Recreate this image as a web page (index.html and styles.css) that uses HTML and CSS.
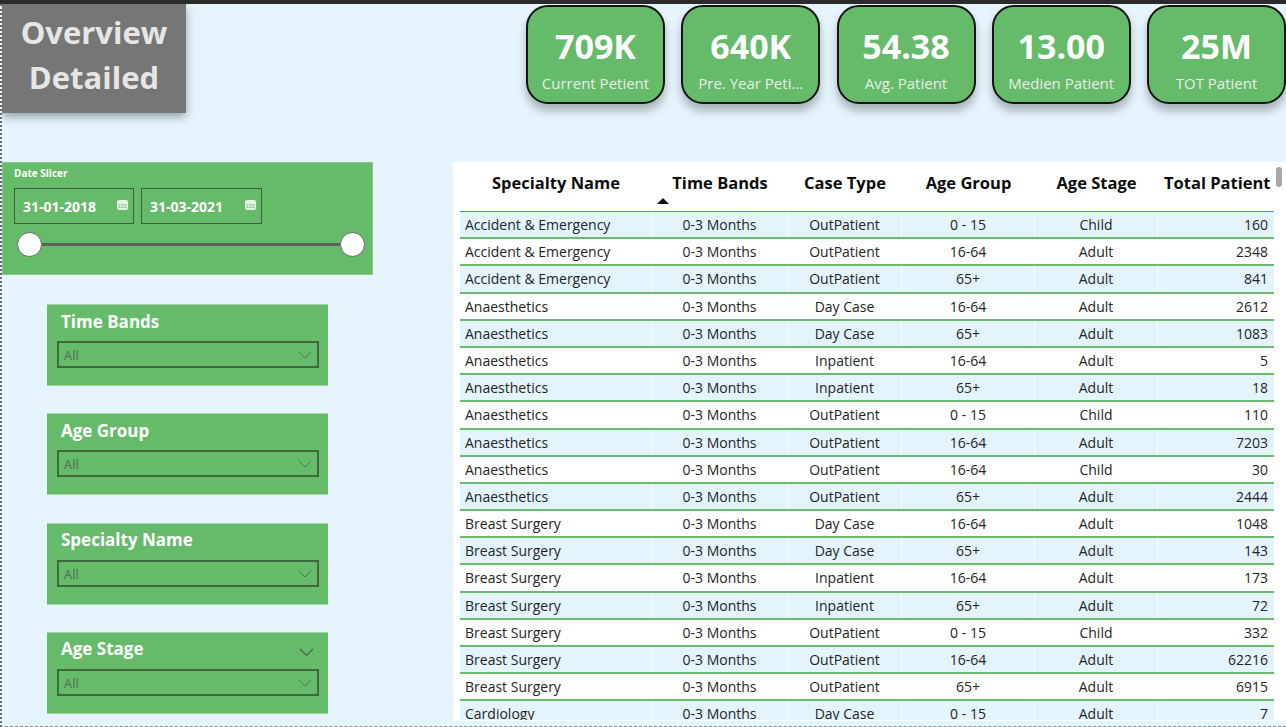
FILE: index.html
```html
<!DOCTYPE html>
<html lang="en">
<head>
<meta charset="utf-8">
<title>Overview Detailed</title>
<link rel="stylesheet" href="styles.css">
</head>
<body>
<div class="topbar"></div>
<div class="canvas">
  <header class="head">
    <div class="title">Overview<br>Detailed</div>
    <div class="kpis">
      <div class="kpi"><div class="kpi-val">709K</div><div class="kpi-lbl">Current Petient</div></div>
      <div class="kpi"><div class="kpi-val">640K</div><div class="kpi-lbl">Pre. Year Peti...</div></div>
      <div class="kpi"><div class="kpi-val">54.38</div><div class="kpi-lbl">Avg. Patient</div></div>
      <div class="kpi"><div class="kpi-val">13.00</div><div class="kpi-lbl">Medien Patient</div></div>
      <div class="kpi"><div class="kpi-val">25M</div><div class="kpi-lbl">TOT Patient</div></div>
    </div>
  </header>
  <main class="main">
    <aside class="filters">
      <section class="date-slicer">
        <div class="ds-label">Date Slicer</div>
        <div class="ds-dates">
          <div class="ds-box"><span>31-01-2018</span>
            <svg class="cal" width="11" height="10" viewBox="0 0 11 10"><rect x="0" y="0" width="11" height="10" rx="2" fill="#e4f3e4"/><rect x="1.5" y="4" width="2" height="1.5" fill="#8cc790"/><rect x="4.5" y="4" width="2" height="1.5" fill="#8cc790"/><rect x="7.5" y="4" width="2" height="1.5" fill="#8cc790"/><rect x="1.5" y="6.5" width="2" height="1.5" fill="#8cc790"/><rect x="4.5" y="6.5" width="2" height="1.5" fill="#8cc790"/><rect x="7.5" y="6.5" width="2" height="1.5" fill="#8cc790"/></svg>
          </div>
          <div class="ds-box ds-box2"><span>31-03-2021</span>
            <svg class="cal" width="11" height="10" viewBox="0 0 11 10"><rect x="0" y="0" width="11" height="10" rx="2" fill="#e4f3e4"/><rect x="1.5" y="4" width="2" height="1.5" fill="#8cc790"/><rect x="4.5" y="4" width="2" height="1.5" fill="#8cc790"/><rect x="7.5" y="4" width="2" height="1.5" fill="#8cc790"/><rect x="1.5" y="6.5" width="2" height="1.5" fill="#8cc790"/><rect x="4.5" y="6.5" width="2" height="1.5" fill="#8cc790"/><rect x="7.5" y="6.5" width="2" height="1.5" fill="#8cc790"/></svg>
          </div>
        </div>
        <div class="ds-slider">
          <div class="handle"></div>
          <div class="track"></div>
          <div class="handle"></div>
        </div>
      </section>
      <div class="slicers">
        <section class="slicer">
          <div class="sl-head"><span class="sl-title">Time Bands</span></div>
          <div class="dropdown"><span>All</span><svg width="14" height="8" viewBox="0 0 14 8"><polyline points="1,1 7,7 13,1" fill="none" stroke="#5b6b5b" stroke-width="1"/></svg></div>
        </section>
        <section class="slicer">
          <div class="sl-head"><span class="sl-title">Age Group</span></div>
          <div class="dropdown"><span>All</span><svg width="14" height="8" viewBox="0 0 14 8"><polyline points="1,1 7,7 13,1" fill="none" stroke="#5b6b5b" stroke-width="1"/></svg></div>
        </section>
        <section class="slicer">
          <div class="sl-head"><span class="sl-title">Specialty Name</span></div>
          <div class="dropdown"><span>All</span><svg width="14" height="8" viewBox="0 0 14 8"><polyline points="1,1 7,7 13,1" fill="none" stroke="#5b6b5b" stroke-width="1"/></svg></div>
        </section>
        <section class="slicer">
          <div class="sl-head"><span class="sl-title">Age Stage</span><svg class="head-chev" width="15" height="9" viewBox="0 0 15 9"><polyline points="1,1 7.5,7.5 14,1" fill="none" stroke="#4f5f4f" stroke-width="1.2"/></svg></div>
          <div class="dropdown"><span>All</span><svg width="14" height="8" viewBox="0 0 14 8"><polyline points="1,1 7,7 13,1" fill="none" stroke="#5b6b5b" stroke-width="1"/></svg></div>
        </section>
      </div>
    </aside>
    <section class="tablecard">
      <div class="tbl">
        <div class="thead">
          <div class="th c">Specialty Name</div>
          <div class="th c sorted"><span>Time Bands</span><i class="sort"></i></div>
          <div class="th c">Case Type</div>
          <div class="th c">Age Group</div>
          <div class="th c">Age Stage</div>
          <div class="th r">Total Patient</div>
        </div>
        <div class="tbody">
          <div class="tr"><div class="td l">Accident &amp; Emergency</div><div class="td c">0-3 Months</div><div class="td c">OutPatient</div><div class="td c">0 - 15</div><div class="td c">Child</div><div class="td r">160</div></div>
          <div class="tr"><div class="td l">Accident &amp; Emergency</div><div class="td c">0-3 Months</div><div class="td c">OutPatient</div><div class="td c">16-64</div><div class="td c">Adult</div><div class="td r">2348</div></div>
          <div class="tr"><div class="td l">Accident &amp; Emergency</div><div class="td c">0-3 Months</div><div class="td c">OutPatient</div><div class="td c">65+</div><div class="td c">Adult</div><div class="td r">841</div></div>
          <div class="tr"><div class="td l">Anaesthetics</div><div class="td c">0-3 Months</div><div class="td c">Day Case</div><div class="td c">16-64</div><div class="td c">Adult</div><div class="td r">2612</div></div>
          <div class="tr"><div class="td l">Anaesthetics</div><div class="td c">0-3 Months</div><div class="td c">Day Case</div><div class="td c">65+</div><div class="td c">Adult</div><div class="td r">1083</div></div>
          <div class="tr"><div class="td l">Anaesthetics</div><div class="td c">0-3 Months</div><div class="td c">Inpatient</div><div class="td c">16-64</div><div class="td c">Adult</div><div class="td r">5</div></div>
          <div class="tr"><div class="td l">Anaesthetics</div><div class="td c">0-3 Months</div><div class="td c">Inpatient</div><div class="td c">65+</div><div class="td c">Adult</div><div class="td r">18</div></div>
          <div class="tr"><div class="td l">Anaesthetics</div><div class="td c">0-3 Months</div><div class="td c">OutPatient</div><div class="td c">0 - 15</div><div class="td c">Child</div><div class="td r">110</div></div>
          <div class="tr"><div class="td l">Anaesthetics</div><div class="td c">0-3 Months</div><div class="td c">OutPatient</div><div class="td c">16-64</div><div class="td c">Adult</div><div class="td r">7203</div></div>
          <div class="tr"><div class="td l">Anaesthetics</div><div class="td c">0-3 Months</div><div class="td c">OutPatient</div><div class="td c">16-64</div><div class="td c">Child</div><div class="td r">30</div></div>
          <div class="tr"><div class="td l">Anaesthetics</div><div class="td c">0-3 Months</div><div class="td c">OutPatient</div><div class="td c">65+</div><div class="td c">Adult</div><div class="td r">2444</div></div>
          <div class="tr"><div class="td l">Breast Surgery</div><div class="td c">0-3 Months</div><div class="td c">Day Case</div><div class="td c">16-64</div><div class="td c">Adult</div><div class="td r">1048</div></div>
          <div class="tr"><div class="td l">Breast Surgery</div><div class="td c">0-3 Months</div><div class="td c">Day Case</div><div class="td c">65+</div><div class="td c">Adult</div><div class="td r">143</div></div>
          <div class="tr"><div class="td l">Breast Surgery</div><div class="td c">0-3 Months</div><div class="td c">Inpatient</div><div class="td c">16-64</div><div class="td c">Adult</div><div class="td r">173</div></div>
          <div class="tr"><div class="td l">Breast Surgery</div><div class="td c">0-3 Months</div><div class="td c">Inpatient</div><div class="td c">65+</div><div class="td c">Adult</div><div class="td r">72</div></div>
          <div class="tr"><div class="td l">Breast Surgery</div><div class="td c">0-3 Months</div><div class="td c">OutPatient</div><div class="td c">0 - 15</div><div class="td c">Child</div><div class="td r">332</div></div>
          <div class="tr"><div class="td l">Breast Surgery</div><div class="td c">0-3 Months</div><div class="td c">OutPatient</div><div class="td c">16-64</div><div class="td c">Adult</div><div class="td r">62216</div></div>
          <div class="tr"><div class="td l">Breast Surgery</div><div class="td c">0-3 Months</div><div class="td c">OutPatient</div><div class="td c">65+</div><div class="td c">Adult</div><div class="td r">6915</div></div>
          <div class="tr"><div class="td l">Cardiology</div><div class="td c">0-3 Months</div><div class="td c">Day Case</div><div class="td c">0 - 15</div><div class="td c">Adult</div><div class="td r">7</div></div>
        </div>
      </div>
      <div class="scroll"><div class="thumb"></div></div>
    </section>
  </main>
</div>
</body>
</html>
```
FILE: styles.css
```css
* { box-sizing: border-box; }
html, body {
  margin: 0;
  padding: 0;
}
body {
  width: 1286px;
  height: 727px;
  overflow: hidden;
  background: #e6f5fd;
  font-family: "Open Sans", "Noto Sans", "DejaVu Sans", sans-serif;
}
.topbar {
  height: 4px;
  background: #2b2b2b;
}
.canvas {
  height: 723px;
  border-left: 2px dotted #6a6a6a;
  border-bottom: 1px dashed #8a8a8a;
  background: #e6f5fd;
  overflow: hidden;
}
.head {
  height: 158px;
  display: flex;
  align-items: flex-start;
}
.title {
  width: 184px;
  height: 109px;
  background: #767676;
  box-shadow: 0 4px 9px rgba(0, 0, 0, 0.35);
  color: #e6e6e6;
  font-weight: 700;
  font-size: 31px;
  line-height: 45px;
  text-align: center;
  padding-top: 6px;
}
.kpis {
  margin-left: auto;
  margin-top: 1px;
  display: flex;
  gap: 16.25px;
}
.kpi {
  width: 139px;
  height: 99px;
  border: 2px solid #141414;
  border-radius: 22px;
  background: #65bb6a;
  box-shadow: 0 7px 10px rgba(0, 0, 0, 0.28);
  display: flex;
  flex-direction: column;
  align-items: center;
  padding-top: 19px;
}
.kpi-val {
  color: #ffffff;
  font-weight: 700;
  font-size: 34px;
  line-height: 40px;
}
.kpi-lbl {
  margin-top: 7px;
  color: #e9ede9;
  font-size: 15px;
  line-height: 20px;
  white-space: nowrap;
}
.main {
  display: flex;
  align-items: flex-start;
}
.filters {
  width: 451px;
}
.date-slicer {
  width: 371px;
  height: 113px;
  background: #65bb6a;
  border: 1px solid #86c98a;
  padding: 3px 0 0 11px;
}
.ds-label {
  color: #ffffff;
  font-weight: 700;
  font-size: 10px;
  line-height: 14px;
}
.ds-dates {
  margin-top: 8px;
  display: flex;
  gap: 7px;
}
.ds-box {
  width: 120px;
  height: 36px;
  border: 1.5px solid #3d5e3f;
  display: flex;
  align-items: center;
  justify-content: space-between;
  padding: 0 5px 0 8px;
  color: #ffffff;
  font-weight: 700;
  font-size: 14px;
}
.ds-box2 { width: 121px; }
.cal { margin-top: -3px; }
.ds-slider {
  margin-top: 8px;
  margin-left: 3px;
  width: 348px;
  height: 25px;
  display: flex;
  align-items: center;
}
.handle {
  width: 25px;
  height: 25px;
  flex: none;
  border-radius: 50%;
  background: #ffffff;
  border: 1.5px solid #6b6b6b;
}
.track {
  flex: 1;
  height: 3px;
  background: #5f5f5f;
}
.slicers {
  margin-left: 45px;
  margin-top: 29px;
  display: flex;
  flex-direction: column;
  gap: 27.3px;
}
.slicer {
  width: 281px;
  height: 82px;
  background: #65bb6a;
  border-top: 1px solid #9fd6a2;
  border-bottom: 1px solid #9fd6a2;
  padding: 5.5px 0 0 10px;
}
.sl-head {
  display: flex;
  justify-content: space-between;
  align-items: flex-start;
  padding-left: 4px;
  padding-right: 14px;
  height: 22px;
}
.sl-title {
  color: #ffffff;
  font-weight: 700;
  font-size: 17px;
  line-height: 22px;
}
.head-chev { margin-top: 10px; }
.dropdown {
  margin-top: 8.5px;
  width: 262px;
  height: 27px;
  border: 2px solid #40683f;
  display: flex;
  align-items: center;
  justify-content: space-between;
  padding: 1px 5px 0 5px;
  color: #566c57;
  font-size: 13px;
}
.dropdown svg { margin-top: 0; }
.tablecard {
  width: 833px;
  height: 559px;
  background: #ffffff;
  padding-left: 7px;
  display: flex;
}
.tbl {
  width: 814px;
}
.thead, .tr {
  display: grid;
  grid-template-columns: 192px 136px 114px 133px 123px 116px;
}
.thead {
  height: 50px;
  border-bottom: 1px solid #4a8fdb;
}
.th {
  color: #0d0d0d;
  font-weight: 700;
  font-size: 16.5px;
  line-height: 22px;
  padding: 9.5px 6px 0;
  white-space: nowrap;
}
.th.c { text-align: center; }
.th.r { text-align: right; }
.th.sorted {
  display: flex;
  flex-direction: column;
  align-items: center;
}
.sort {
  align-self: flex-start;
  margin-top: 4px;
  margin-left: -1px;
  width: 0;
  height: 0;
  border-left: 6px solid transparent;
  border-right: 6px solid transparent;
  border-bottom: 6px solid #111111;
}
.tbody {
  height: 508px;
  overflow: hidden;
}
.tr {
  height: 27.2px;
  border-bottom: 2px solid #6cbb70;
  background: #ffffff;
}
.tr:nth-child(odd) { background: #e3f4fd; }
.td {
  color: #252423;
  font-size: 14px;
  line-height: 25.2px;
  padding: 0 6px;
  white-space: nowrap;
  border-right: 1px solid rgba(255, 255, 255, 0.85);
}
.td:last-child { border-right: none; }
.td.l { text-align: left; padding-left: 5px; }
.td.c { text-align: center; }
.td.r { text-align: right; }
.scroll {
  width: 12px;
  flex: none;
}
.thumb {
  margin: 5px 0 0 2px;
  width: 6px;
  height: 20px;
  border-radius: 3px;
  background: #a7a7a7;
}
```
